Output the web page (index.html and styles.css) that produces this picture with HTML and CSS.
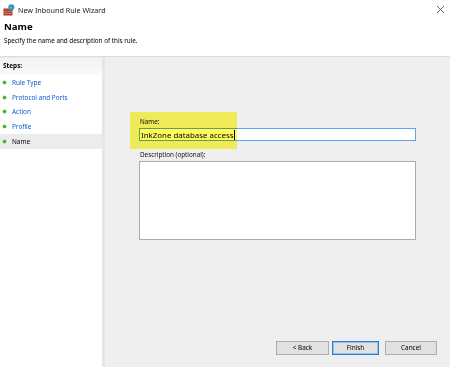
FILE: index.html
```html
<!DOCTYPE html>
<html>
<head>
<meta charset="utf-8">
<link rel="stylesheet" href="styles.css">
</head>
<body>
<div class="window">
  <div class="titlebar">
    <svg class="appicon" width="12" height="12" viewBox="0 0 12 12">
      <rect x="0.5" y="4.5" width="9" height="7" fill="#a33b2a"/>
      <path d="M0.5 7.5h9M0.5 9.5h9M3 4.5v3M6.5 4.5v3M2 7.5v2M5 7.5v2M8 7.5v2M3.5 9.5v2M6.5 9.5v2" stroke="#d9836c" stroke-width="0.6"/>
      <circle cx="8.3" cy="3.2" r="3" fill="#2f8fd8"/>
      <path d="M6.3 2.6c0.8-0.5 1.5 0.3 2.3-0.2c0.5 0.7 1.4 0.6 1.8 1.4c-0.6 0.6-1.2 0.2-1.6 0.8c-0.9-0.2-1.6 0.3-2.4-0.4z" fill="#5cc24a"/>
    </svg>
    <span class="title">New Inbound Rule Wizard</span>
    <svg class="close" width="9" height="9" viewBox="0 0 9 9"><path d="M1 1L8 8M8 1L1 8" stroke="#555" stroke-width="0.9"/></svg>
  </div>
  <div class="header">
    <div class="heading">Name</div>
    <div class="subtitle">Specify the name and description of this rule.</div>
  </div>
  <div class="main">
    <div class="steps">
      <div class="steps-head">Steps:</div>
      <div class="step"><span class="dot"></span><span class="link">Rule Type</span></div>
      <div class="step"><span class="dot"></span><span class="link">Protocol and Ports</span></div>
      <div class="step"><span class="dot"></span><span class="link">Action</span></div>
      <div class="step"><span class="dot"></span><span class="link">Profile</span></div>
      <div class="step current"><span class="dot"></span><span>Name</span></div>
    </div>
    <div class="content">
      <div class="form">
        <div class="label">Name:</div>
        <div class="input"><span class="caret">InkZone database access</span></div>
        <div class="label desc-label">Description (optional):</div>
        <div class="textarea"></div>
      </div>
      <div class="buttons">
        <div class="btn">&lt; Back</div>
        <div class="btn default">Finish</div>
        <div class="btn cancel">Cancel</div>
      </div>
      <div class="highlight"></div>
    </div>
  </div>
</div>
</body>
</html>
```
FILE: styles.css
```css
html, body {
  margin: 0;
  padding: 0;
}
body {
  width: 450px;
  height: 367px;
  overflow: hidden;
  background: #fff;
  font-family: "Noto Sans", "Open Sans", sans-serif;
  color: #000;
}
.window {
  display: flex;
  flex-direction: column;
  height: 367px;
}
.titlebar {
  height: 18px;
  box-sizing: border-box;
  display: flex;
  align-items: center;
  padding-left: 3px;
  padding-right: 5px;
  padding-top: 1px;
}
.appicon {
  flex: none;
}
.title {
  margin-left: 3px;
  font-size: 7.2px;
  color: #222;
}
.close {
  margin-left: auto;
}
.header {
  height: 39px;
  padding-left: 4px;
  border-bottom: 1px solid #dcdcdc;
  box-sizing: border-box;
}
.heading {
  font-weight: bold;
  font-size: 9.6px;
  line-height: 12px;
  margin-top: 3px;
}
.subtitle {
  font-size: 6.3px;
  line-height: 10px;
  margin-top: 3px;
}
.main {
  flex: 1;
  display: flex;
  min-height: 0;
}
.steps {
  width: 102px;
  flex: none;
  border-right: 3px solid #e6e6e6;
  background: #fff;
  font-size: 6.4px;
}
.steps-head {
  height: 18px;
  line-height: 16px;
  padding-left: 3px;
  font-weight: bold;
  background: linear-gradient(#f2f2f2, #fafafa);
  border-top: 1px solid #ececec;
  box-sizing: border-box;
}
.step {
  height: 14.75px;
  display: flex;
  align-items: center;
  padding-left: 3px;
}
.step.current {
  background: #ececec;
}
.dot {
  width: 3px;
  height: 3px;
  border-radius: 50%;
  background: #3fae2a;
  margin-right: 6px;
  box-shadow: 0 0 0 0.5px #7bcf5f;
}
.link {
  color: #0a5ccc;
}
.content {
  position: relative;
  flex: 1;
  background: #efefef;
  display: flex;
  flex-direction: column;
  padding: 61px 13px 12px 34px;
}
.form {
  width: 277px;
}
.label {
  font-size: 6.3px;
  line-height: 8px;
  color: #111;
  padding-left: 1px;
}
.input {
  margin-top: 2px;
  height: 13px;
  box-sizing: border-box;
  border: 1px solid #5ea4e8;
  background: #fff;
  font-size: 7.9px;
  line-height: 11px;
  padding-left: 1px;
  display: flex;
}
.caret {
  border-right: 1px solid #000;
  line-height: 10px;
  margin-top: 0.5px;
  height: 10px;
}
.desc-label {
  margin-top: 10px;
}
.textarea {
  margin-top: 2px;
  height: 79px;
  box-sizing: border-box;
  border: 1px solid #acacac;
  background: #fff;
}
.buttons {
  margin-top: auto;
  display: flex;
  justify-content: flex-end;
  gap: 3px;
}
.btn {
  width: 53px;
  height: 14px;
  box-sizing: border-box;
  border: 1px solid #adadad;
  background: #e1e1e1;
  font-size: 6.4px;
  line-height: 12px;
  text-align: center;
}
.btn.default {
  width: 47px;
  border: 1px solid #2b7fd6;
  box-shadow: inset 0 0 0 0.5px #5aa1e6;
}
.btn.cancel {
  margin-left: 3px;
  width: 52px;
}
.highlight {
  position: absolute;
  left: 25px;
  top: 55px;
  width: 107px;
  height: 37px;
  background: #fffb5e;
  mix-blend-mode: multiply;
  pointer-events: none;
}
```
